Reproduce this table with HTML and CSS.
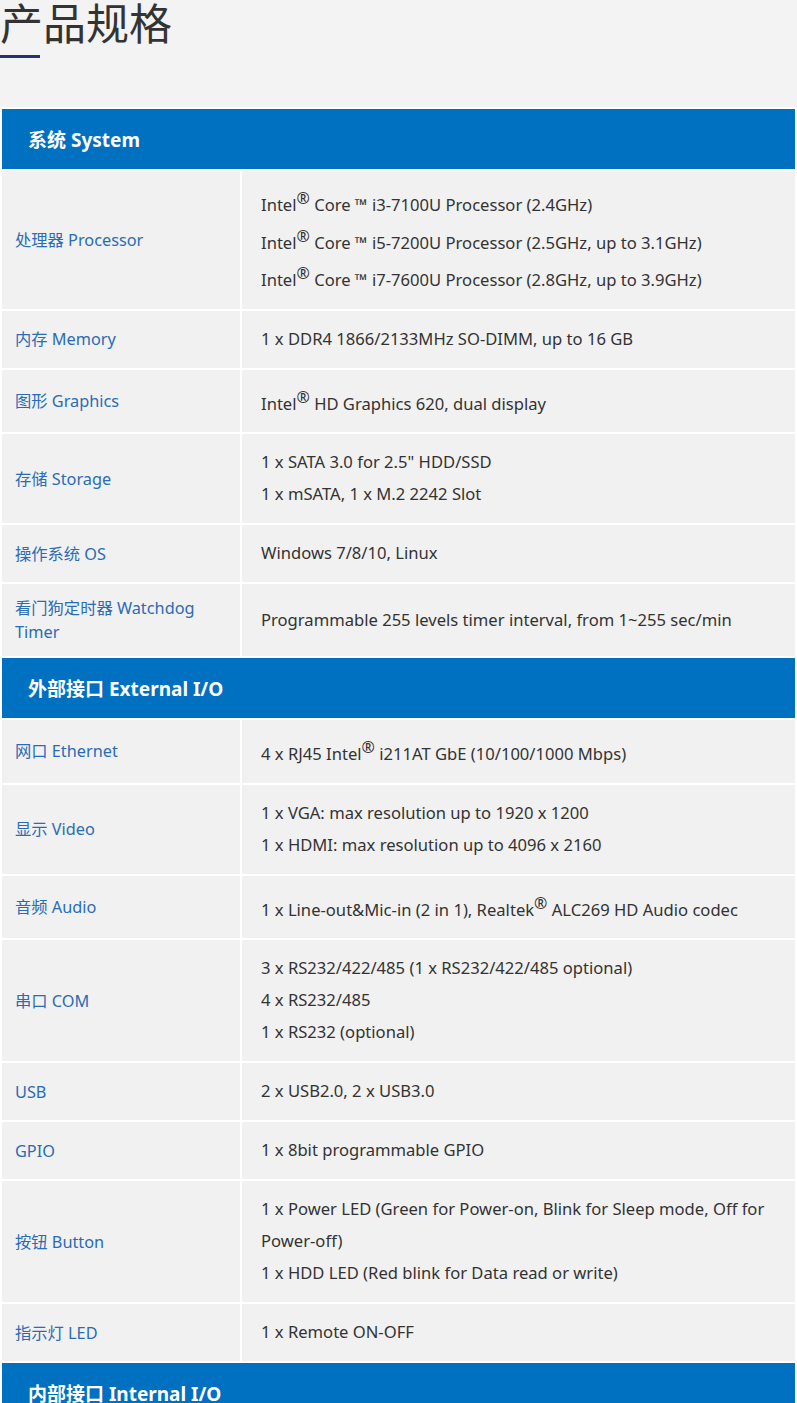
FILE: index.html
```html
<!DOCTYPE html>
<html>
<head>
  <meta charset="utf-8">
  <title>产品规格</title>
  <link rel="stylesheet" href="styles.css">
</head>
<body>
  <div class="page-title">
    <h1>产品规格</h1>
    <div class="title-line"></div>
  </div>
  <table class="spec">
    <colgroup>
      <col class="col-name">
      <col>
    </colgroup>
    <tr><th colspan="2">系统 System</th></tr>
    <tr>
      <td class="name">处理器 Processor</td>
      <td class="val">
        <p>Intel<sup>®</sup> Core ™ i3-7100U Processor (2.4GHz)</p>
        <p>Intel<sup>®</sup> Core ™ i5-7200U Processor (2.5GHz, up to 3.1GHz)</p>
        <p>Intel<sup>®</sup> Core ™ i7-7600U Processor (2.8GHz, up to 3.9GHz)</p>
      </td>
    </tr>
    <tr>
      <td class="name">内存 Memory</td>
      <td class="val"><p>1 x DDR4 1866/2133MHz SO-DIMM, up to 16 GB</p></td>
    </tr>
    <tr>
      <td class="name">图形 Graphics</td>
      <td class="val"><p>Intel<sup>®</sup> HD Graphics 620, dual display</p></td>
    </tr>
    <tr>
      <td class="name">存储 Storage</td>
      <td class="val">
        <p>1 x SATA 3.0 for 2.5" HDD/SSD</p>
        <p>1 x mSATA, 1 x M.2 2242 Slot</p>
      </td>
    </tr>
    <tr>
      <td class="name">操作系统 OS</td>
      <td class="val"><p>Windows 7/8/10, Linux</p></td>
    </tr>
    <tr>
      <td class="name">看门狗定时器 Watchdog Timer</td>
      <td class="val"><p>Programmable 255 levels timer interval, from 1~255 sec/min</p></td>
    </tr>
    <tr><th colspan="2">外部接口 External I/O</th></tr>
    <tr>
      <td class="name">网口 Ethernet</td>
      <td class="val"><p>4 x RJ45 Intel<sup>®</sup> i211AT GbE (10/100/1000 Mbps)</p></td>
    </tr>
    <tr>
      <td class="name">显示 Video</td>
      <td class="val">
        <p>1 x VGA: max resolution up to 1920 x 1200</p>
        <p>1 x HDMI: max resolution up to 4096 x 2160</p>
      </td>
    </tr>
    <tr>
      <td class="name">音频 Audio</td>
      <td class="val"><p>1 x Line-out&amp;Mic-in (2 in 1), Realtek<sup>®</sup> ALC269 HD Audio codec</p></td>
    </tr>
    <tr>
      <td class="name">串口 COM</td>
      <td class="val">
        <p>3 x RS232/422/485 (1 x RS232/422/485 optional)</p>
        <p>4 x RS232/485</p>
        <p>1 x RS232 (optional)</p>
      </td>
    </tr>
    <tr>
      <td class="name">USB</td>
      <td class="val"><p>2 x USB2.0, 2 x USB3.0</p></td>
    </tr>
    <tr>
      <td class="name">GPIO</td>
      <td class="val"><p>1 x 8bit programmable GPIO</p></td>
    </tr>
    <tr>
      <td class="name">按钮 Button</td>
      <td class="val">
        <p>1 x Power LED (Green for Power-on, Blink for Sleep mode, Off for Power-off)</p>
        <p>1 x HDD LED (Red blink for Data read or write)</p>
      </td>
    </tr>
    <tr>
      <td class="name">指示灯 LED</td>
      <td class="val"><p>1 x Remote ON-OFF</p></td>
    </tr>
    <tr><th colspan="2">内部接口 Internal I/O</th></tr>
    <tr>
      <td class="name">扩展 Expansion</td>
      <td class="val"><p>1 x Mini PCIe</p></td>
    </tr>
  </table>
</body>
</html>
```

FILE: styles.css
```css
body {
  margin: 0;
  background-color: #f3f3f3;
  font-family: "Noto Sans", "Noto Sans CJK SC", sans-serif;
  color: #333;
}
.page-title {
  height: 107px;
}
.page-title h1 {
  margin: 0;
  font-size: 43px;
  font-weight: normal;
  line-height: 42px;
  color: #333;
  font-family: "Noto Sans CJK SC", sans-serif;
}
.title-line {
  width: 40px;
  height: 3px;
  margin-top: 13px;
  background-color: #25336f;
}
.spec {
  width: 797px;
  border-collapse: separate;
  border-spacing: 2px;
  background-color: #fff;
  table-layout: fixed;
}
.col-name {
  width: 238px;
}
.spec th {
  background-color: #0070c0;
  color: white;
  font-size: 19px;
  font-weight: bold;
  text-align: left;
  height: 60px;
  padding: 0 0 0 26px;
}
.spec td {
  background-color: #f1f1f1;
  vertical-align: middle;
}
.spec .name {
  padding: 12px 13px;
  font-size: 16.3px;
  color: #2a6cb5;
  line-height: 24px;
}
.spec .val {
  padding: 12px 19px 13px;
  font-size: 16.6px;
  line-height: 32px;
}
.val p {
  margin: 0;
}
.val sup {
  font-size: 16px;
  line-height: 30px;
}
```
